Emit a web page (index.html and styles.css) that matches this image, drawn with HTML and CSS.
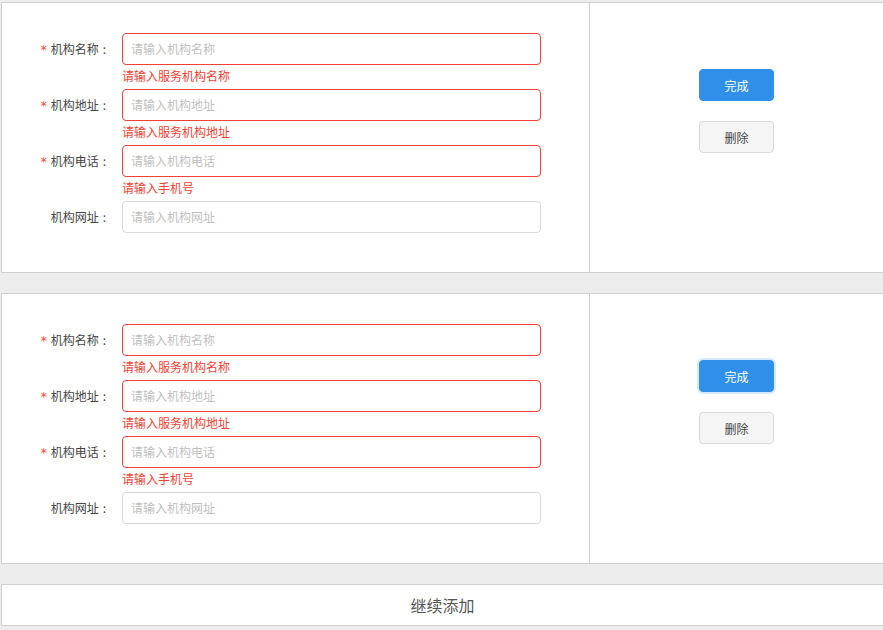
FILE: index.html
```html
<!DOCTYPE html>
<html lang="zh-CN">
<head>
<meta charset="utf-8">
<title>机构</title>
<link rel="stylesheet" href="styles.css">
</head>
<body>
<div class="page">
  <div class="card">
    <div class="form">
      <div class="row">
        <div class="label"><span class="req">*</span>机构名称<span class="colon">:</span></div>
        <div class="field">
          <div class="input err"><span class="ph">请输入机构名称</span></div>
          <div class="explain">请输入服务机构名称</div>
        </div>
      </div>
      <div class="row">
        <div class="label"><span class="req">*</span>机构地址<span class="colon">:</span></div>
        <div class="field">
          <div class="input err"><span class="ph">请输入机构地址</span></div>
          <div class="explain">请输入服务机构地址</div>
        </div>
      </div>
      <div class="row">
        <div class="label"><span class="req">*</span>机构电话<span class="colon">:</span></div>
        <div class="field">
          <div class="input err"><span class="ph">请输入机构电话</span></div>
          <div class="explain">请输入手机号</div>
        </div>
      </div>
      <div class="row">
        <div class="label">机构网址<span class="colon">:</span></div>
        <div class="field">
          <div class="input"><span class="ph">请输入机构网址</span></div>
        </div>
      </div>
    </div>
    <div class="actions">
      <button class="btn primary">完成</button>
      <button class="btn">删除</button>
    </div>
  </div>

  <div class="card">
    <div class="form">
      <div class="row">
        <div class="label"><span class="req">*</span>机构名称<span class="colon">:</span></div>
        <div class="field">
          <div class="input err"><span class="ph">请输入机构名称</span></div>
          <div class="explain">请输入服务机构名称</div>
        </div>
      </div>
      <div class="row">
        <div class="label"><span class="req">*</span>机构地址<span class="colon">:</span></div>
        <div class="field">
          <div class="input err"><span class="ph">请输入机构地址</span></div>
          <div class="explain">请输入服务机构地址</div>
        </div>
      </div>
      <div class="row">
        <div class="label"><span class="req">*</span>机构电话<span class="colon">:</span></div>
        <div class="field">
          <div class="input err"><span class="ph">请输入机构电话</span></div>
          <div class="explain">请输入手机号</div>
        </div>
      </div>
      <div class="row">
        <div class="label">机构网址<span class="colon">:</span></div>
        <div class="field">
          <div class="input"><span class="ph">请输入机构网址</span></div>
        </div>
      </div>
    </div>
    <div class="actions">
      <button class="btn primary focus">完成</button>
      <button class="btn">删除</button>
    </div>
  </div>

  <div class="add">继续添加</div>
</div>
</body>
</html>
```
FILE: styles.css
```css
html, body {
  margin: 0;
  padding: 0;
  background: #ededed;
  overflow: hidden;
}
body {
  font-family: "Noto Sans CJK SC", "Noto Sans", sans-serif;
  font-size: 12px;
  color: #333;
}
.page {
  padding: 2px 0 0 1px;
  display: flex;
  flex-direction: column;
  gap: 20px;
}
.card {
  box-sizing: border-box;
  width: 883px;
  height: 271px;
  background: #fff;
  border: 1px solid #cfcfcf;
  display: flex;
}
.form {
  box-sizing: border-box;
  width: 588px;
  border-right: 1px solid #cfcfcf;
  padding: 30px 0 0 0;
}
.row {
  display: flex;
  align-items: flex-start;
}
.label {
  box-sizing: border-box;
  width: 120px;
  height: 32px;
  line-height: 32px;
  text-align: right;
  color: #444;
  white-space: nowrap;
}
.colon {
  display: inline-block;
  margin: 0 16px 0 4px;
}
.req {
  color: #f04134;
  margin-right: 4px;
  font-family: "DejaVu Sans", sans-serif;
  font-size: 12px;
}
.field {
  width: 419px;
}
.input {
  box-sizing: border-box;
  height: 32px;
  border: 1px solid #d9d9d9;
  border-radius: 4px;
  padding: 0 8px;
  line-height: 30px;
  background: #fff;
}
.input.err {
  border-color: #f04134;
}
.ph {
  color: #bfbfbf;
}
.explain {
  color: #f04134;
  height: 24px;
  line-height: 22px;
}
.actions {
  flex: 1;
  display: flex;
  flex-direction: column;
  align-items: center;
  padding-top: 66px;
  gap: 20px;
}
.btn {
  box-sizing: border-box;
  width: 75px;
  height: 32px;
  border: 1px solid #d9d9d9;
  border-radius: 4px;
  background: #f5f5f5;
  color: #444;
  font-family: inherit;
  font-size: 12px;
  padding: 0;
}
.btn.primary {
  background: #308fe9;
  border-color: #308fe9;
  color: #fff;
}
.btn.focus {
  box-shadow: 0 0 0 2px rgba(48, 143, 233, 0.2);
}
.add {
  box-sizing: border-box;
  width: 883px;
  height: 42px;
  background: #fff;
  border: 1px solid #cfcfcf;
  text-align: center;
  line-height: 40px;
  font-size: 16px;
  color: #555;
}
```
